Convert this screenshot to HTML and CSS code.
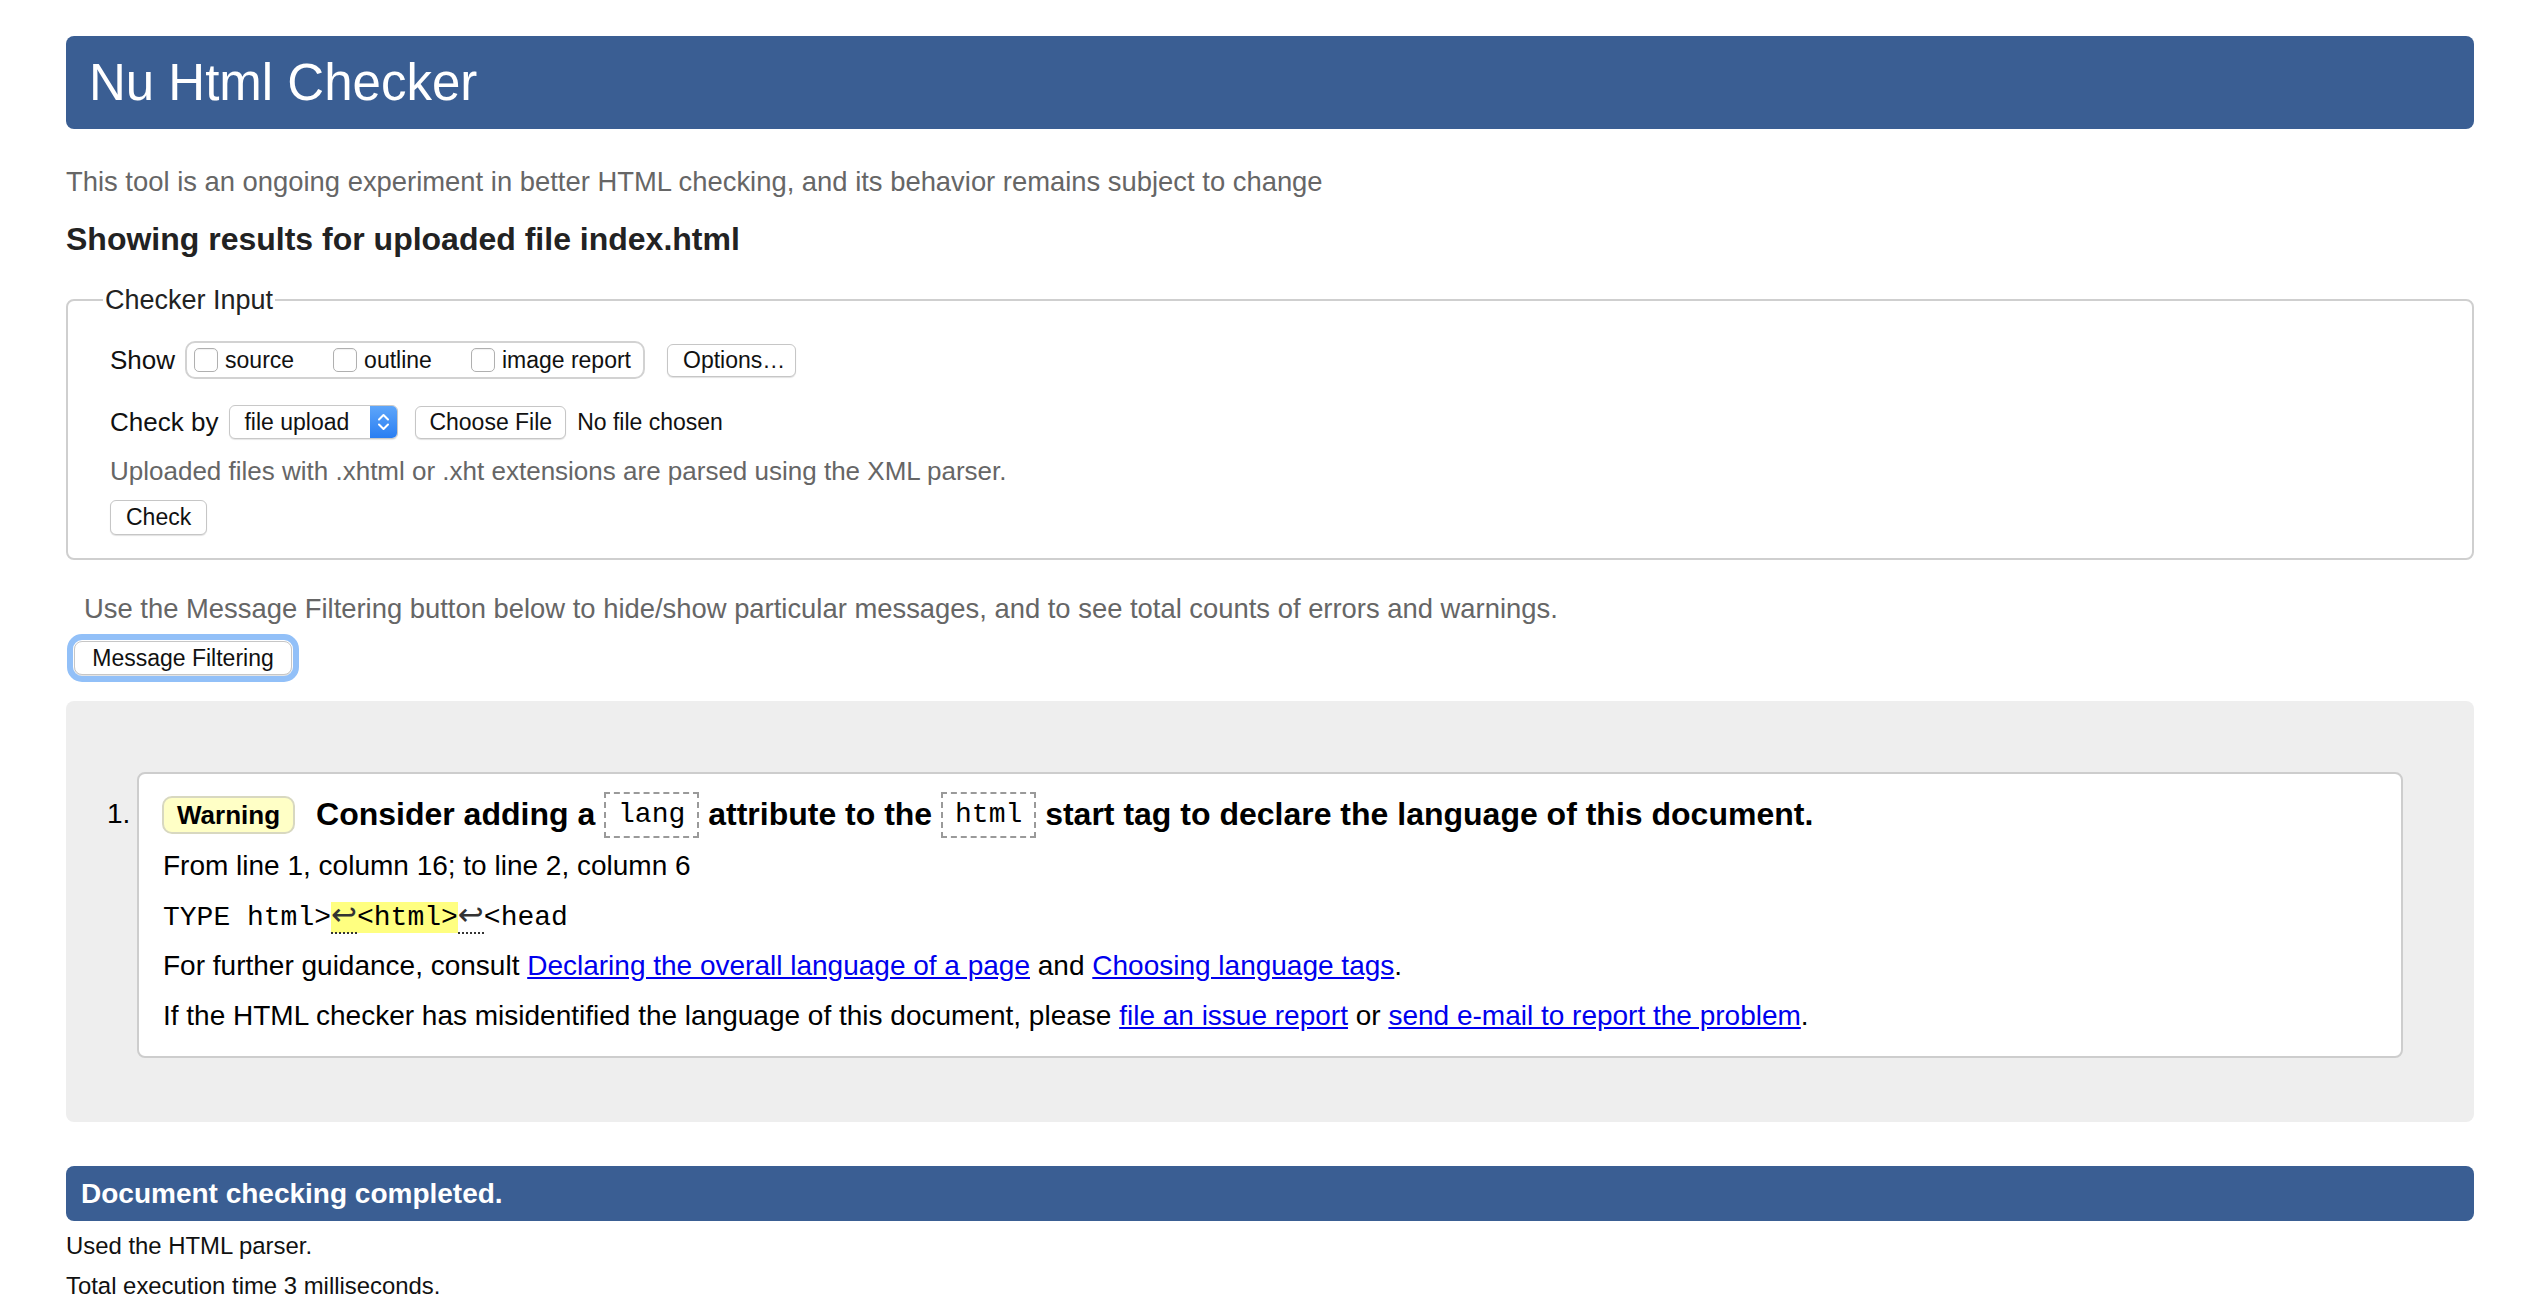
FILE: index.html
```html
<!DOCTYPE html>
<html lang="en">
<head>
<meta charset="utf-8">
<title>Nu Html Checker</title>
<link rel="stylesheet" href="styles.css">
</head>
<body>
<h1 class="title">Nu Html Checker</h1>
<p class="intro">This tool is an ongoing experiment in better HTML checking, and its behavior remains subject to change</p>
<p class="results-heading">Showing results for uploaded file index.html</p>
<form class="checker">
  <fieldset class="input-set">
    <legend class="legend">Checker Input</legend>
    <div class="row row-show">
      <span class="label label-show">Show</span>
      <span class="group">
        <label class="opt"><input type="checkbox" class="cb">source</label>
        <label class="opt"><input type="checkbox" class="cb">outline</label>
        <label class="opt opt-last"><input type="checkbox" class="cb">image report</label>
      </span>
      <button type="button" class="btn btn-options">Options…</button>
    </div>
    <div class="row row-check">
      <span class="label label-check">Check by</span>
      <span class="select">
        <span class="select-text">file upload</span>
        <span class="stepper"><svg width="27" height="32" viewBox="0 0 27 32"><path d="M9 13.5 L13.5 9 L18 13.5 M9 18.5 L13.5 23 L18 18.5" stroke="#fff" stroke-width="2" fill="none" stroke-linecap="round" stroke-linejoin="round"/></svg></span>
      </span>
      <button type="button" class="btn btn-file">Choose File</button>
      <span class="file-status">No file chosen</span>
    </div>
    <p class="note">Uploaded files with .xhtml or .xht extensions are parsed using the XML parser.</p>
    <div class="submit-row"><button type="button" class="btn btn-check">Check</button></div>
  </fieldset>
</form>
<p class="filter-note">Use the Message Filtering button below to hide/show particular messages, and to see total counts of errors and warnings.</p>
<div class="filter-row"><button type="button" class="btn btn-filter">Message Filtering</button></div>
<div class="results">
  <ol class="messages">
    <li class="message">
      <span class="num">1.</span>
      <div class="msg">
        <p class="msg-head"><span class="badge">Warning</span>Consider adding a <code class="cbox">lang</code> attribute to the <code class="cbox">html</code> start tag to declare the language of this document.</p>
        <p class="loc">From line 1, column 16; to line 2, column 6</p>
        <p class="extract"><code>TYPE html&gt;<mark class="hl"><span class="lf">↩</span>&lt;html&gt;</mark><span class="lf">↩</span>&lt;head</code></p>
        <p>For further guidance, consult <a href="#">Declaring the overall language of a page</a> and <a href="#">Choosing language tags</a>.</p>
        <p>If the HTML checker has misidentified the language of this document, please <a href="#">file an issue report</a> or <a href="#">send e-mail to report the problem</a>.</p>
      </div>
    </li>
  </ol>
</div>
<h2 class="done">Document checking completed.</h2>
<div class="stats">
  <p>Used the HTML parser.</p>
  <p>Total execution time 3 milliseconds.</p>
</div>
</body>
</html>
```
FILE: styles.css
```css
* { box-sizing: border-box; }
html, body { margin: 0; }
body {
  padding: 36px 58px 0 66px;
  font-family: "Liberation Sans", Arial, Helvetica, sans-serif;
  color: #000;
  background: #fff;
}
.title {
  margin: 0;
  height: 93px;
  line-height: 93px;
  padding: 0 23px;
  background: #3a5e93;
  color: #fff;
  font-size: 51px;
  font-weight: normal;
  border-radius: 8px;
}
.intro {
  margin: 35px 0 0;
  font-size: 27.4px;
  line-height: 36px;
  color: #666;
}
.results-heading {
  margin: 19px 0 0;
  font-size: 32px;
  line-height: 40px;
  font-weight: bold;
  color: #222;
}
.checker { margin: 25px 0 0; }
.input-set {
  margin: 0;
  padding: 0 40px 23px 42px;
  border: 2px solid #cfcfcf;
  border-radius: 8px;
  min-width: 0;
}
.legend {
  font-size: 27px;
  line-height: 32px;
  color: #222;
  padding: 0 2px;
  margin-left: -7px;
}
.row { display: flex; align-items: center; }
.row-show { margin-top: 25px; height: 38px; }
.row-check { margin-top: 26px; height: 34px; }
.label { font-size: 26px; color: #111; }
.label-show { margin-right: 10px; }
.label-check { margin-right: 11px; }
.group {
  display: flex;
  align-items: center;
  height: 38px;
  border: 2px solid #d2d2d2;
  border-radius: 10px;
  padding: 0 12px 0 7px;
}
.opt {
  display: flex;
  align-items: center;
  font-size: 23px;
  color: #111;
  margin-right: 39px;
}
.opt-last { margin-right: 0; }
.cb {
  appearance: none;
  -webkit-appearance: none;
  width: 24px;
  height: 24px;
  margin: 0 7px 0 0;
  border: 1px solid #b0b0b0;
  border-radius: 5px;
  background: #fff;
  box-shadow: inset 0 1px 1px rgba(0,0,0,0.06);
}
.btn {
  font-family: "Liberation Sans", Arial, Helvetica, sans-serif;
  font-size: 23px;
  color: #111;
  height: 33px;
  padding: 0 15px;
  background: #fff;
  border: 1px solid #c6c6c6;
  border-radius: 6px;
  box-shadow: 0 1px 1px rgba(0,0,0,0.12);
  line-height: 1;
  white-space: nowrap;
}
.btn-options { margin-left: 22px; width: 129px; }
.select {
  display: flex;
  align-items: center;
  width: 169px;
  height: 34px;
  border: 1px solid #c8c8c8;
  border-radius: 6px;
  background: #fff;
  box-shadow: 0 1px 1px rgba(0,0,0,0.1);
  overflow: hidden;
}
.select-text { font-size: 23px; color: #111; padding-left: 14px; flex: 1; }
.stepper {
  display: flex;
  width: 27px;
  height: 100%;
  background: linear-gradient(#5ea6fa, #2a7ef2);
}
.btn-file { margin-left: 17px; padding: 0 13px; }
.file-status { margin-left: 11px; font-size: 23px; color: #111; }
.note {
  margin: 16px 0 0;
  font-size: 26px;
  line-height: 32px;
  color: #666;
}
.submit-row { margin-top: 13px; display: flex; }
.btn-check { height: 35px; width: 97px; }
.filter-note {
  margin: 32px 0 0 18px;
  font-size: 27.4px;
  line-height: 34px;
  color: #666;
}
.filter-row { margin: 15px 0 0 8px; display: flex; }
.btn-filter {
  height: 34px;
  width: 218px;
  padding: 0;
  border-radius: 8px;
  outline: 6px solid #92c0f8;
  outline-offset: 1px;
}
.results {
  margin-top: 26px;
  background: #eee;
  border-radius: 8px;
  padding: 71px 71px 64px 41px;
}
.messages { list-style: none; margin: 0; padding: 0; }
.message { display: flex; align-items: flex-start; }
.num {
  width: 30px;
  flex: none;
  font-size: 28px;
  line-height: 46px;
  margin-top: 19px;
}
.msg {
  flex: 1;
  background: #fff;
  border: 2px solid #cdcdcd;
  border-radius: 8px;
  padding: 17px 24px 23px;
}
.msg p {
  margin: 16px 0 0;
  font-size: 28px;
  line-height: 34px;
  height: 34px;
}
.msg .msg-head {
  margin: 0;
  font-size: 32px;
  font-weight: bold;
  line-height: 46px;
  height: 46px;
  white-space: nowrap;
}
.msg .loc { margin-top: 12px; }
.badge {
  display: inline-block;
  vertical-align: middle;
  height: 38px;
  line-height: 34px;
  padding: 0 13px;
  margin: -4px 21px 0 -1px;
  font-size: 26px;
  font-weight: bold;
  background: #ffffc6;
  border: 2px solid #d8d8c0;
  border-radius: 10px;
}
.cbox {
  display: inline-block;
  vertical-align: middle;
  margin-top: -4px;
  font-family: "Liberation Mono", "Courier New", monospace;
  font-weight: normal;
  font-size: 28px;
  line-height: 42px;
  padding: 0 12px;
  border: 2px dashed #9a9a9a;
}
.extract code {
  font-family: "Liberation Mono", "Courier New", monospace;
  font-size: 28px;
}
.hl { background: #ffff80; color: inherit; }
.lf {
  font-family: "DejaVu Sans", sans-serif;
  font-size: 31px;
  line-height: 20px;
  color: #333;
  border-bottom: 2px dotted #333;
}
a { color: #0000ee; }
.done {
  margin: 44px 0 0;
  height: 55px;
  line-height: 55px;
  padding-left: 15px;
  background: #3a5e93;
  color: #fff;
  font-size: 28px;
  font-weight: bold;
  border-radius: 8px;
}
.stats { padding-top: 5px; }
.stats p {
  margin: 0;
  font-size: 23.9px;
  line-height: 40px;
  color: #111;
}
```
